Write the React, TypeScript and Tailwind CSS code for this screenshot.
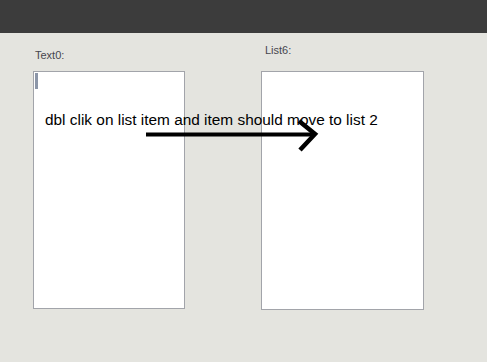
import React from 'react';

const App: React.FC = () => {
  return (
    <div className="relative w-[487px] h-[362px] bg-[#e4e4df] overflow-hidden font-['Liberation_Sans',Arial,sans-serif]">
      {/* Title bar */}
      <div className="h-[33px] bg-[#3c3c3c]" />

      {/* Form area */}
      <div className="flex items-start gap-[76px] pl-[33px]">
        <div className="flex flex-col pt-[16px]">
          <label className="ml-[2px] text-[11px] leading-[13px] text-[#46464e]">Text0:</label>
          <div className="mt-[9px] w-[152px] h-[238px] bg-white border border-[#a2a4aa] p-[1px]">
            <div className="w-[3px] h-[16px] bg-[#8c96a8]" />
          </div>
        </div>
        <div className="flex flex-col pt-[11px]">
          <label className="ml-[4px] text-[11px] leading-[13px] text-[#46464e]">List6:</label>
          <div className="mt-[14px] w-[163px] h-[239px] bg-white border border-[#a2a4aa]" />
        </div>
      </div>

      {/* Annotation over the form */}
      <p className="absolute left-[45px] top-[112px] text-[15.4px] leading-[15px] text-black whitespace-nowrap">
        dbl clik on list item and item should move to list 2
      </p>
      <svg className="absolute left-0 top-0" width="487" height="362" viewBox="0 0 487 362">
        <path d="M146 134.5 L314 134.5" stroke="#000" strokeWidth="4" fill="none" />
        <path d="M299 121 L315 134 L300 150" stroke="#000" strokeWidth="4.5" fill="none" strokeLinejoin="miter" />
      </svg>
    </div>
  );
};

export default App;
